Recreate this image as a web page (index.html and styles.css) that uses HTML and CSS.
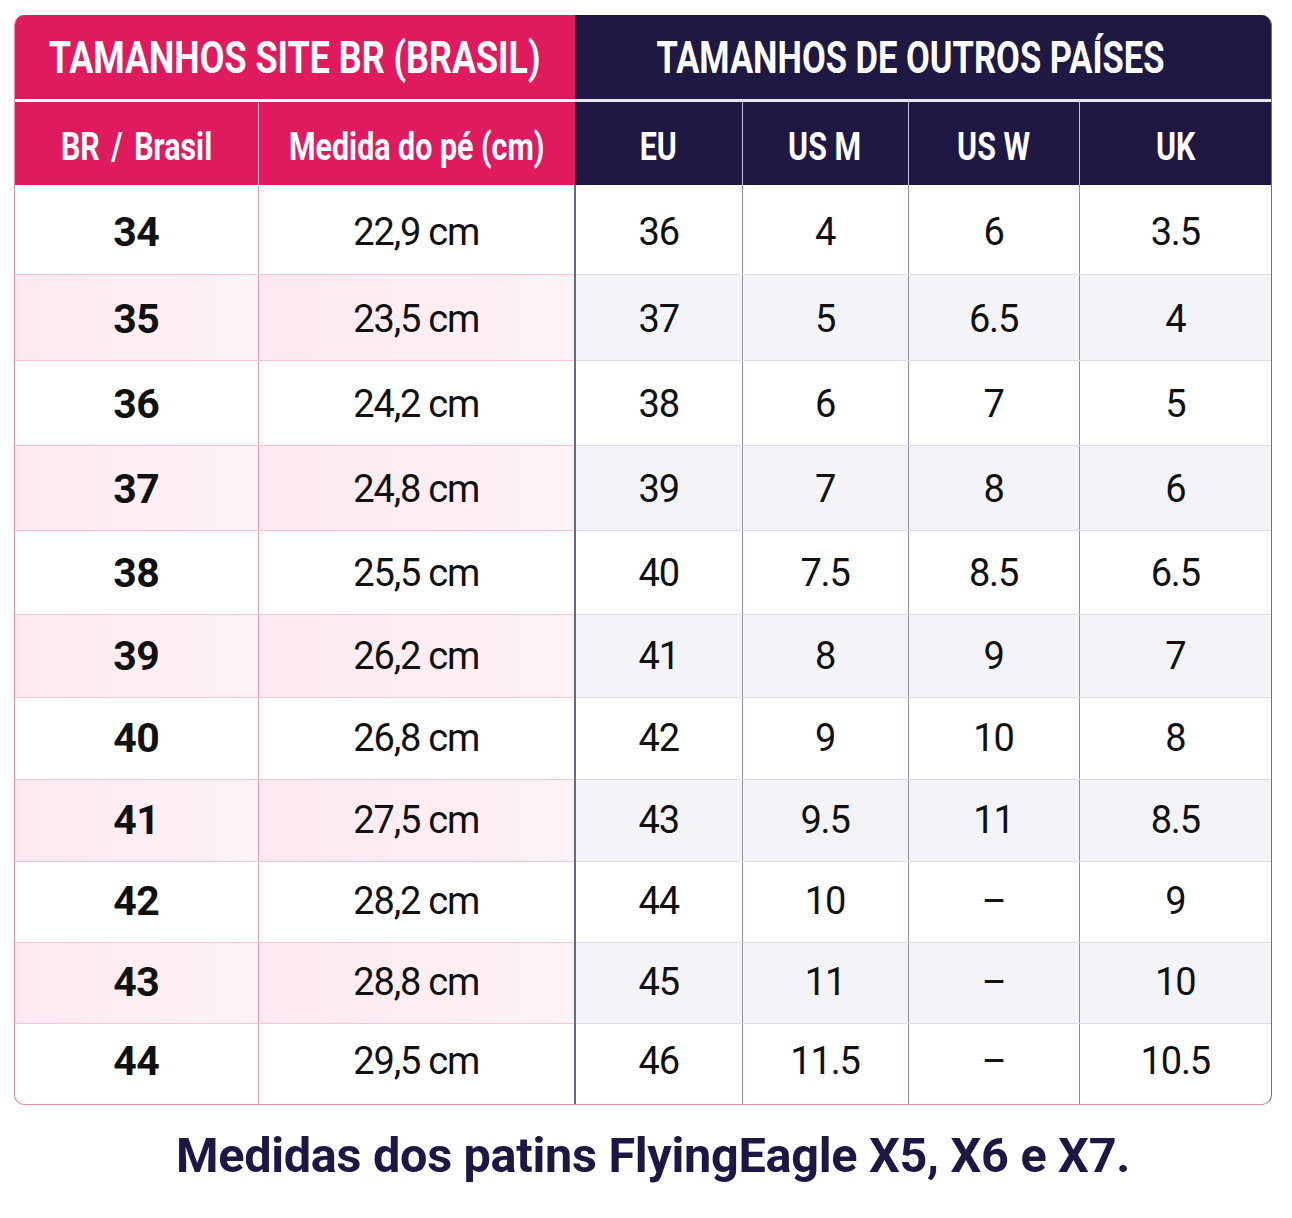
FILE: index.html
```html
<!DOCTYPE html>
<html lang="pt-BR">
<head>
<meta charset="utf-8">
<title>Tabela de tamanhos</title>
<link rel="stylesheet" href="styles.css">
</head>
<body>
<main class="page">
  <div class="card">
    <table class="sizes">
      <colgroup>
        <col class="c1"><col class="c2"><col class="c3"><col class="c4"><col class="c5"><col class="c6">
      </colgroup>
      <thead>
        <tr class="h1">
          <th colspan="2" class="br"><span class="cond">TAMANHOS SITE BR (BRASIL)</span></th>
          <th colspan="4" class="ot"><span class="cond">TAMANHOS DE OUTROS PAÍSES</span></th>
        </tr>
        <tr class="h2">
          <th class="br"><span class="cond wide">BR / Brasil</span></th>
          <th class="br"><span class="cond">Medida do pé (cm)</span></th>
          <th class="ot first"><span class="cond">EU</span></th>
          <th class="ot"><span class="cond">US M</span></th>
          <th class="ot"><span class="cond">US W</span></th>
          <th class="ot"><span class="cond">UK</span></th>
        </tr>
      </thead>
      <tbody>
        <tr><td class="b sz">34</td><td class="b">22,9 cm</td><td class="o first">36</td><td class="o">4</td><td class="o">6</td><td class="o">3.5</td></tr>
        <tr><td class="b sz">35</td><td class="b">23,5 cm</td><td class="o first">37</td><td class="o">5</td><td class="o">6.5</td><td class="o">4</td></tr>
        <tr><td class="b sz">36</td><td class="b">24,2 cm</td><td class="o first">38</td><td class="o">6</td><td class="o">7</td><td class="o">5</td></tr>
        <tr><td class="b sz">37</td><td class="b">24,8 cm</td><td class="o first">39</td><td class="o">7</td><td class="o">8</td><td class="o">6</td></tr>
        <tr><td class="b sz">38</td><td class="b">25,5 cm</td><td class="o first">40</td><td class="o">7.5</td><td class="o">8.5</td><td class="o">6.5</td></tr>
        <tr><td class="b sz">39</td><td class="b">26,2 cm</td><td class="o first">41</td><td class="o">8</td><td class="o">9</td><td class="o">7</td></tr>
        <tr><td class="b sz">40</td><td class="b">26,8 cm</td><td class="o first">42</td><td class="o">9</td><td class="o">10</td><td class="o">8</td></tr>
        <tr><td class="b sz">41</td><td class="b">27,5 cm</td><td class="o first">43</td><td class="o">9.5</td><td class="o">11</td><td class="o">8.5</td></tr>
        <tr><td class="b sz">42</td><td class="b">28,2 cm</td><td class="o first">44</td><td class="o">10</td><td class="o">–</td><td class="o">9</td></tr>
        <tr><td class="b sz">43</td><td class="b">28,8 cm</td><td class="o first">45</td><td class="o">11</td><td class="o">–</td><td class="o">10</td></tr>
        <tr><td class="b sz">44</td><td class="b">29,5 cm</td><td class="o first">46</td><td class="o">11.5</td><td class="o">–</td><td class="o">10.5</td></tr>
      </tbody>
    </table>
  </div>
  <p class="caption">Medidas dos patins FlyingEagle X5, X6 e X7.</p>
</main>
</body>
</html>
```
FILE: styles.css
```css
html, body {
  margin: 0;
  padding: 0;
  background: #ffffff;
}
body {
  font-family: Roboto, "Noto Sans", "Liberation Sans", sans-serif;
  color: #111111;
}
.page {
  padding: 15px 20px 0 14px;
}
.card {
  width: 1258px;
  border-radius: 10px;
  overflow: hidden;
  border-left: 1px solid #e48aab;
  border-bottom: 1px solid #e48aab;
  border-right: 1px solid #6f6d90;
  box-sizing: border-box;
  background: #fff;
}
.sizes {
  width: 100%;
  border-collapse: collapse;
  table-layout: fixed;
}
.c1 { width: 243px; }
.c2 { width: 317px; }
.c3 { width: 167px; }
.c4 { width: 166px; }
.c5 { width: 171px; }
.c6 { width: auto; }

th, td {
  padding: 0;
  text-align: center;
  vertical-align: middle;
}
.cond {
  display: inline-block;
  transform: scaleX(0.8);
  white-space: nowrap;
  margin: 0 -80px;
}
.wide { word-spacing: 5px; }
th {
  color: #ffffff;
  font-weight: 700;
}
th.br { background: #e01a5f; }
th.ot { background: #1e1843; }

.h1 th {
  height: 85px;
  font-size: 44px;
  border-bottom: 3px solid #ffffff;
  padding-top: 2px;
  box-sizing: border-box;
}
.h1 th.br .cond { transform: scaleX(0.815); }
.h1 th.ot .cond { transform: scaleX(0.785); }
.h1 th.ot {
  border-bottom-color: #e4e4ee;
  padding-right: 24px;
}
.h2 th {
  height: 85px;
  font-size: 38px;
  padding-top: 7px;
  box-sizing: border-box;
}
.h2 th.br + th.br { border-left: 1px solid #f6b3ca; }
.h2 th.ot + th.ot { border-left: 1px solid #bdbcd0; }

td {
  font-size: 38px;
  letter-spacing: -1.2px;
  border-bottom: 1px solid #dcdce6;
}
td.b {
  border-bottom-color: #f5c6d6;
}
td.b + td.b { border-left: 1px solid #e79ab6; }
td.o { border-left: 1px solid #8e8ca8; }
td.o.first { border-left: 2px solid #6a6888; }
td.sz {
  font-weight: 700;
  font-size: 41px;
  letter-spacing: -0.5px;
}
tbody tr:last-child td { border-bottom: none; }

tbody tr:nth-child(even) td.b {
  background: linear-gradient(90deg, #fde8f0 0%, #fef3f7 100%);
}
tbody tr:nth-child(even) td.o {
  background: #f3f3f8;
}

tbody tr:nth-child(1) td { height: 89px; padding-top: 5px; }
tbody tr:nth-child(2) td { height: 86px; padding-top: 3px; }
tbody tr:nth-child(3) td,
tbody tr:nth-child(4) td { height: 85px; padding-top: 2px; }
tbody tr:nth-child(5) td { height: 84px; padding-top: 1px; }
tbody tr:nth-child(6) td { height: 83px; }
tbody tr:nth-child(7) td,
tbody tr:nth-child(8) td { height: 82px; }
tbody tr:nth-child(9) td,
tbody tr:nth-child(10) td { height: 81px; padding-bottom: 2px; }
tbody tr:nth-child(11) td { height: 81px; padding-bottom: 5px; }
tbody td { box-sizing: border-box; }

.caption {
  width: 1258px;
  margin: 22px 0 0 10px;
  text-align: center;
  font-size: 48.6px;
  font-weight: 700;
  color: #1d1744;
  letter-spacing: -0.3px;
  line-height: 58px;
}
```
